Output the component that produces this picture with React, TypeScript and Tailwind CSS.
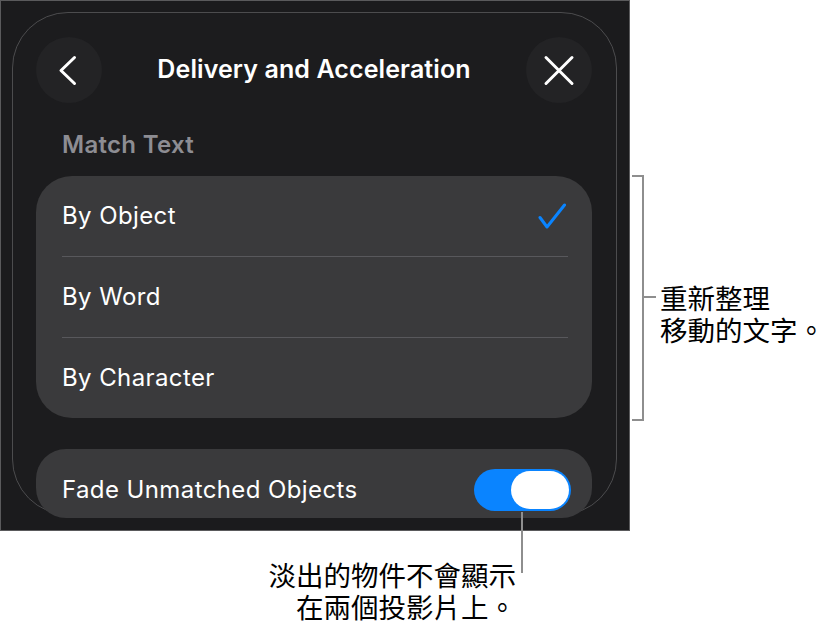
import React from "react"

// Options for matching text between slides, with callouts
const options = ["By Object", "By Word", "By Character"]

function Callout({ children }: { children: React.ReactNode }) {
  return (
    <div className="font-['Noto_Sans_CJK_TC',sans-serif] text-[27.5px] leading-[32px] text-black">
      {children}
    </div>
  )
}

export default function App() {
  return (
    <div className="relative w-[833px] h-[630px] bg-white font-['Inter',sans-serif]">
      <div className="flex items-start">
        {/* phone screenshot */}
        <div className="w-[630px] h-[531px] border border-[#5a5a5c] bg-[#1b1b1d] overflow-hidden">
          <div className="mt-[11px] ml-[11px] w-[605px] h-[503px] rounded-[56px] border border-[#4c4c4e] bg-[#1c1c1e] pl-[23px] pr-[24px] pt-[24px]">
            <div className="flex items-center justify-between h-[66px]">
              <div className="w-[66px] h-[66px] rounded-full bg-[#232325]">
                <svg width="66" height="66" viewBox="0 0 66 66" fill="none">
                  <path d="M38.5 20.5 L25 33.5 L38.5 46.5" stroke="white" strokeWidth="3" strokeLinecap="round" strokeLinejoin="round" />
                </svg>
              </div>
              <div className="flex-1 text-center text-white text-[25px] font-semibold tracking-[0.1px]">
                Delivery and Acceleration
              </div>
              <div className="w-[66px] h-[66px] rounded-full bg-[#232325]">
                <svg width="66" height="66" viewBox="0 0 66 66" fill="none">
                  <path d="M20 20.5 L46 46.5 M46 20.5 L20 46.5" stroke="white" strokeWidth="3" strokeLinecap="round" />
                </svg>
              </div>
            </div>

            <div className="mt-[28px] pl-[26px] text-[24px] leading-[28px] font-semibold tracking-[0.3px] text-[#8d8d93]">
              Match Text
            </div>

            <div className="mt-[17px] rounded-[36px] bg-[#3a3a3c]">
              {options.map((o, i) => (
                <div key={o}>
                  {i > 0 && <div className="ml-[26px] mr-[24px] h-px bg-[#58585c]" />}
                  <div className="flex items-center justify-between h-[80px] pl-[26px] pr-[26px] text-white text-[24px] tracking-[0.4px]">
                    <span>{o}</span>
                    {i === 0 && (
                      <svg width="28" height="26" viewBox="0 0 28 26" fill="none">
                        <path d="M2 14.5 L9 24 L26.5 2" stroke="#0a84ff" strokeWidth="3" strokeLinecap="round" strokeLinejoin="round" />
                      </svg>
                    )}
                  </div>
                </div>
              ))}
            </div>

            <div className="mt-[31px] h-[69px] rounded-[30px] bg-[#3a3a3c] overflow-hidden relative">
              <div className="flex items-center justify-between h-[82px] pl-[26px] pr-[21px]">
                <span className="text-white text-[24px] tracking-[0.4px]">Fade Unmatched Objects</span>
                <div className="flex justify-end items-center w-[97px] h-[42px] rounded-full bg-[#0a84ff] p-[2px]">
                  <div className="w-[58px] h-[38px] rounded-full bg-white" />
                </div>
              </div>
            </div>
          </div>
        </div>

        {/* bracket callout */}
        <div className="flex items-start mt-[175px]">
          <div className="ml-[2px] w-[12px] h-[246px] border-t-2 border-b-2 border-r-2 border-[#8e8e8e]" />
          <div className="flex items-start mt-[106px]">
            <div className="flex items-center h-[32px]">
              <div className="w-[12px] h-[2px] bg-[#8e8e8e]" />
            </div>
            <div className="ml-[4px]">
              <Callout>
                重新整理
                <br />
                移動的文字。
              </Callout>
            </div>
          </div>
        </div>
      </div>

      {/* toggle callout */}
      <div className="absolute left-[521px] top-[512px] w-[2px] h-[61px] bg-[#8e8e8e]" />
      <div className="w-[630px] flex justify-end pr-[114px] mt-[27px]">
        <div className="text-right">
          <Callout>
            淡出的物件不會顯示
            <br />
            在兩個投影片上。
          </Callout>
        </div>
      </div>
    </div>
  )
}
